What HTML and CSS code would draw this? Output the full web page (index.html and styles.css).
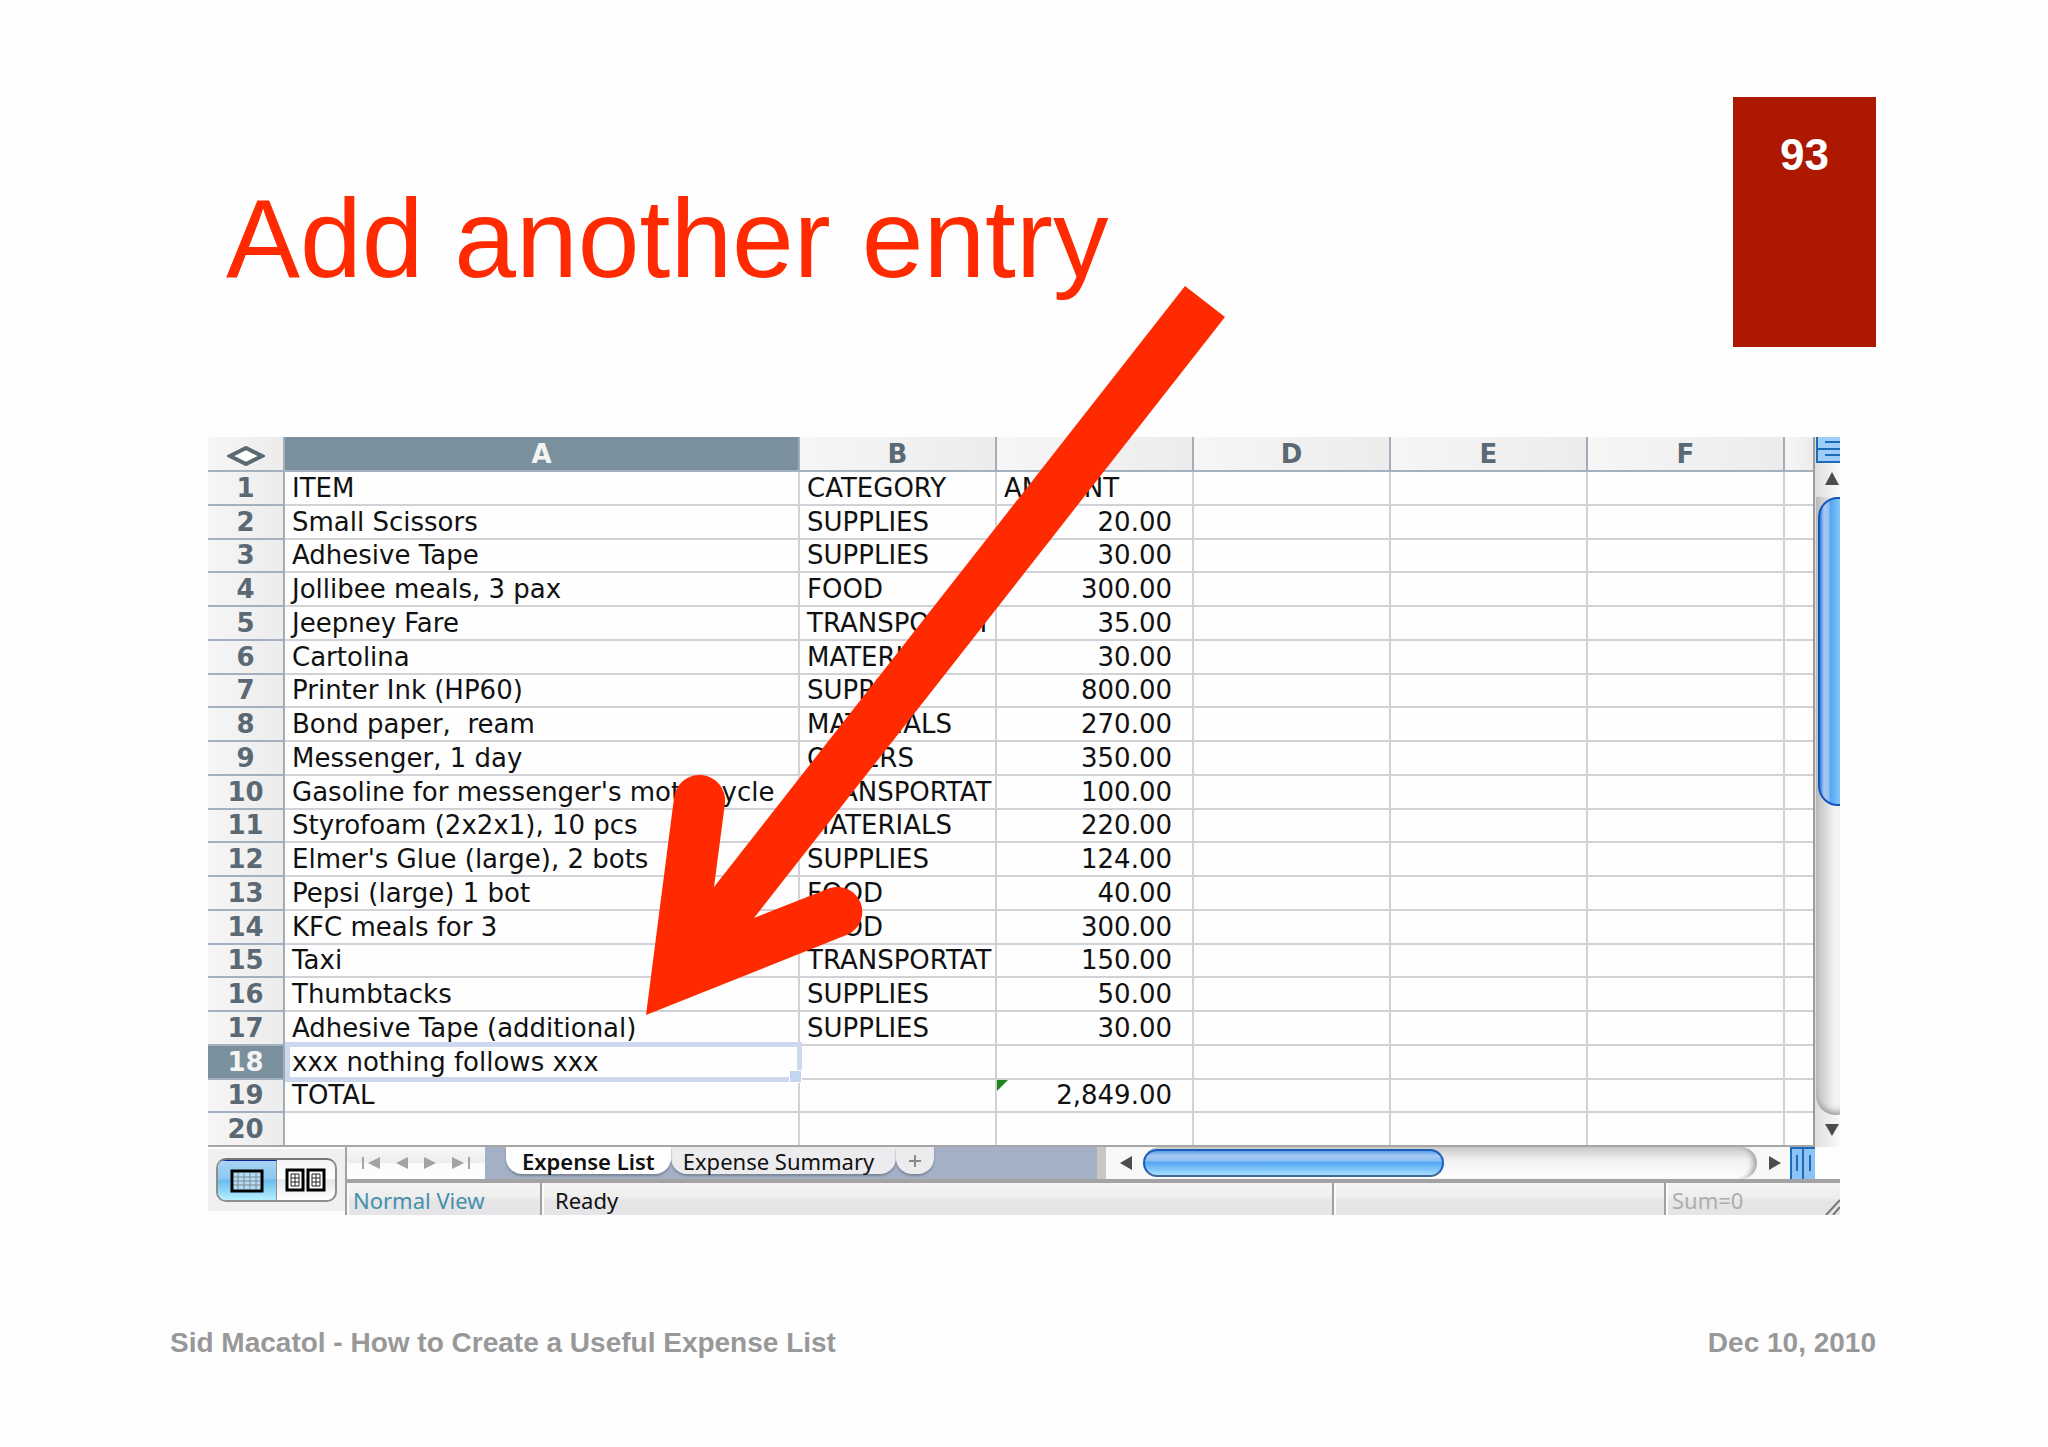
FILE: index.html
```
<!DOCTYPE html>
<html lang="en">
<head>
  <meta charset="utf-8">
  <title>Add another entry</title>
  <link rel="stylesheet" href="styles.css">
</head>
<body>
  <header class="slide-header">
    <h1>Add another entry</h1>
    <div class="page-number">93</div>
  </header>

  <main class="sheet">
    <div class="grid-area">
      <table class="grid">
        <colgroup>
          <col class="col-head"><col class="col-item"><col class="col-std"><col class="col-std"><col class="col-std"><col class="col-std"><col class="col-std"><col>
        </colgroup>
        <thead>
          <tr>
            <th><svg class="diamond" width="38" height="20" viewBox="0 0 38 20"><path d="M3 10L19 2L35 10L19 18Z" fill="#fff" stroke="#5b6971" stroke-width="4"/></svg></th>
            <th class="active">A</th><th>B</th><th>C</th><th>D</th><th>E</th><th>F</th><th></th>
          </tr>
        </thead>
        <tbody>
          <tr><th>1</th><td>ITEM</td><td>CATEGORY</td><td>AMOUNT</td><td></td><td></td><td></td><td></td></tr>
          <tr><th>2</th><td>Small Scissors</td><td>SUPPLIES</td><td class="num">20.00</td><td></td><td></td><td></td><td></td></tr>
          <tr><th>3</th><td>Adhesive Tape</td><td>SUPPLIES</td><td class="num">30.00</td><td></td><td></td><td></td><td></td></tr>
          <tr><th>4</th><td>Jollibee meals, 3 pax</td><td>FOOD</td><td class="num">300.00</td><td></td><td></td><td></td><td></td></tr>
          <tr><th>5</th><td>Jeepney Fare</td><td>TRANSPORTAT</td><td class="num">35.00</td><td></td><td></td><td></td><td></td></tr>
          <tr><th>6</th><td>Cartolina</td><td>MATERIALS</td><td class="num">30.00</td><td></td><td></td><td></td><td></td></tr>
          <tr><th>7</th><td>Printer Ink (HP60)</td><td>SUPPLIES</td><td class="num">800.00</td><td></td><td></td><td></td><td></td></tr>
          <tr><th>8</th><td>Bond paper,  ream</td><td>MATERIALS</td><td class="num">270.00</td><td></td><td></td><td></td><td></td></tr>
          <tr><th>9</th><td>Messenger, 1 day</td><td>OTHERS</td><td class="num">350.00</td><td></td><td></td><td></td><td></td></tr>
          <tr><th>10</th><td>Gasoline for messenger's motorcycle</td><td>TRANSPORTAT</td><td class="num">100.00</td><td></td><td></td><td></td><td></td></tr>
          <tr><th>11</th><td>Styrofoam (2x2x1), 10 pcs</td><td>MATERIALS</td><td class="num">220.00</td><td></td><td></td><td></td><td></td></tr>
          <tr><th>12</th><td>Elmer's Glue (large), 2 bots</td><td>SUPPLIES</td><td class="num">124.00</td><td></td><td></td><td></td><td></td></tr>
          <tr><th>13</th><td>Pepsi (large) 1 bot</td><td>FOOD</td><td class="num">40.00</td><td></td><td></td><td></td><td></td></tr>
          <tr><th>14</th><td>KFC meals for 3</td><td>FOOD</td><td class="num">300.00</td><td></td><td></td><td></td><td></td></tr>
          <tr><th>15</th><td>Taxi</td><td>TRANSPORTAT</td><td class="num">150.00</td><td></td><td></td><td></td><td></td></tr>
          <tr><th>16</th><td>Thumbtacks</td><td>SUPPLIES</td><td class="num">50.00</td><td></td><td></td><td></td><td></td></tr>
          <tr><th>17</th><td>Adhesive Tape (additional)</td><td>SUPPLIES</td><td class="num">30.00</td><td></td><td></td><td></td><td></td></tr>
          <tr><th class="active">18</th><td class="selected">xxx nothing follows xxx</td><td></td><td></td><td></td><td></td><td></td><td></td></tr>
          <tr><th>19</th><td>TOTAL</td><td></td><td class="num flagged">2,849.00</td><td></td><td></td><td></td><td></td></tr>
          <tr><th>20</th><td></td><td></td><td></td><td></td><td></td><td></td><td></td></tr>
        </tbody>
      </table>

      <div class="vscroll">
        <svg class="split-v" width="24" height="26" viewBox="0 0 24 26"><rect x="1" y="-1" width="30" height="26" fill="#9fcdfa" stroke="#1a6cb8" stroke-width="2"/><path d="M1 12H24M9 5H24M9 18H24" stroke="#1a6cb8" stroke-width="2"/></svg>
        <svg class="scroll-up" width="24" height="34" viewBox="0 0 24 34"><path d="M9 22L16 9L23 22Z" fill="#4c4c4c"/></svg>
        <div class="vtrack"><div class="vthumb"></div></div>
        <svg class="scroll-down" width="24" height="32" viewBox="0 0 24 32"><path d="M9 9L16 21L23 9Z" fill="#4c4c4c"/></svg>
      </div>
    </div>

    <div class="bottom">
      <div class="views">
        <div class="view-switch">
          <button class="on" aria-label="Normal view">
            <svg width="34" height="24" viewBox="0 0 34 24"><rect x="2" y="2" width="30" height="20" fill="#b4dcf6" stroke="#000" stroke-width="3"/><path d="M8 4V20M14 4V20M20 4V20M26 4V20M4 8H30M4 12H30M4 16H30" stroke="#7b8a94" stroke-width="1"/></svg>
          </button>
          <button aria-label="Page layout view">
            <svg width="42" height="24" viewBox="0 0 42 24"><g fill="#fff" stroke="#000" stroke-width="3"><rect x="2" y="2" width="16" height="20"/><rect x="23" y="2" width="16" height="20"/></g><path d="M6 6H14V18H6ZM6 10H14M6 14H14M10 6V18M27 6H35V18H27ZM27 10H35M27 14H35M31 6V18" fill="none" stroke="#222" stroke-width="1"/></svg>
          </button>
        </div>
      </div>

      <div class="bars">
        <div class="tab-bar">
          <div class="sheet-nav">
            <button aria-label="First sheet"><svg width="20" height="14" viewBox="0 0 20 14"><path d="M2 1V13" stroke="#a3a3a3" stroke-width="2"/><path d="M19 1V13L7 7Z" fill="#a3a3a3"/></svg></button>
            <button aria-label="Previous sheet"><svg width="12" height="14" viewBox="0 0 12 14"><path d="M12 1V13L0 7Z" fill="#a3a3a3"/></svg></button>
            <button aria-label="Next sheet"><svg width="12" height="14" viewBox="0 0 12 14"><path d="M0 1V13L12 7Z" fill="#a3a3a3"/></svg></button>
            <button aria-label="Last sheet"><svg width="20" height="14" viewBox="0 0 20 14"><path d="M18 1V13" stroke="#a3a3a3" stroke-width="2"/><path d="M1 1V13L13 7Z" fill="#a3a3a3"/></svg></button>
          </div>
          <div class="tabs">
            <button class="tab current">Expense List</button>
            <button class="tab">Expense Summary</button>
            <button class="tab add" aria-label="Add sheet"><svg width="14" height="14" viewBox="0 0 14 14"><path d="M7 1V13M1 7H13" stroke="#8a8a8a" stroke-width="2"/></svg></button>
          </div>
          <div class="hscroll">
            <svg width="37" height="32" viewBox="0 0 37 32"><path d="M26 9V23L14 16Z" fill="#4c4c4c"/></svg>
            <div class="htrack"><div class="hthumb"></div></div>
            <svg width="33" height="32" viewBox="0 0 33 32"><path d="M12 9V23L24 16Z" fill="#4c4c4c"/></svg>
            <svg width="25" height="32" viewBox="0 0 25 32"><rect width="25" height="32" fill="#8ec3f5"/><path d="M1 0V32M13 0V32M0 1H25" stroke="#1a6cb8" stroke-width="2"/><path d="M7 8V24M20 8V24" stroke="#1a6cb8" stroke-width="2"/></svg>
          </div>
          <div class="corner"></div>
        </div>
        <div class="status-bar">
          <div class="status mode">Normal View</div>
          <div class="status ready">Ready</div>
          <div class="status blank"></div>
          <div class="status sum">Sum=0</div>
          <svg class="grip" width="16" height="16" viewBox="0 0 16 16"><path d="M2 16L16 1M9 16L16 8" stroke="#777" stroke-width="2"/></svg>
        </div>
      </div>
    </div>

    <svg class="arrow" viewBox="0 0 1632 778">
      <path d="M438 578L466 361A25 25 0 0 1 517 366L506 450L977 -151L1017 -120L546 481L622 451A25 25 0 0 1 641 497Z" fill="#ff2a00"/>
    </svg>
  </main>

  <footer class="slide-footer">
    <span>Sid Macatol - How to Create a Useful Expense List</span>
    <span>Dec 10, 2010</span>
  </footer>
</body>
</html>
```
FILE: styles.css
```
* {
  box-sizing: border-box;
}

body {
  margin: 0;
  background-color: #fefefe;
  font-family: "Liberation Sans", Arial, sans-serif;
}

button {
  margin: 0;
  padding: 0;
  border: none;
  background: none;
  font: inherit;
  cursor: pointer;
}

svg {
  display: block;
}

.slide-header {
  display: flex;
  justify-content: space-between;
  align-items: flex-start;
  padding: 97px 172px 0 226px;
}

h1 {
  margin: 78px 0 0;
  font-size: 111px;
  line-height: 128px;
  font-weight: normal;
  color: #ff2a00;
}

.page-number {
  width: 143px;
  height: 250px;
  padding-top: 32px;
  background-color: #ac1800;
  color: #fff;
  font-size: 44px;
  line-height: 52px;
  font-weight: bold;
  text-align: center;
}

.sheet {
  position: relative;
  margin: 90px 208px 0;
}

.grid-area {
  display: flex;
}

.grid {
  flex: 1;
  width: 100%;
  height: 710px;
  table-layout: fixed;
  border-collapse: separate;
  border-spacing: 0;
  border-right: 2px solid #9c9c9c;
  border-bottom: 2px solid #a6a6a6;
  font-family: "DejaVu Sans", Verdana, sans-serif;
  font-size: 26px;
  line-height: 30px;
}

.col-head { width: 77px; }
.col-item { width: 515px; }
.col-std { width: 197px; }

.grid th,
.grid td {
  padding: 0;
  overflow: hidden;
  text-align: left;
  white-space: pre;
}

.grid td {
  padding-left: 7px;
  border-right: 2px solid #d2d2d6;
  border-bottom: 2px solid #d2d2d6;
  background-color: #fefefe;
  color: #111;
}

.grid th {
  border-right: 2px solid #a3adb9;
  border-bottom: 2px solid #a3b0bf;
  background: linear-gradient(to right, #f6f6f6, #ececec);
  color: #5a6973;
  text-align: center;
}

.grid thead th {
  height: 35px;
}

.grid th:last-child,
.grid td:last-child {
  border-right: none;
}

.grid tbody tr:last-child > * {
  border-bottom: none;
}

.grid th.active {
  background: #7b909d;
  color: #f4f4f4;
}

.grid td.num {
  padding-right: 20px;
  text-align: right;
}

.diamond {
  margin: 4px auto 0;
}

.grid td.selected {
  position: relative;
  overflow: visible;
}

.selected::before {
  content: "";
  position: absolute;
  inset: -4px -4px -4px 0;
  border: 5px solid #cbd8ed;
}

.selected::after {
  content: "";
  position: absolute;
  right: -4px;
  bottom: -5px;
  width: 11px;
  height: 11px;
  border: 1px solid #fff;
  background-color: #c3d6f1;
}

.grid td.flagged {
  position: relative;
}

.flagged::before {
  content: "";
  position: absolute;
  left: 0;
  top: 0;
  border-top: 11px solid #1f8420;
  border-right: 11px solid transparent;
}

.vscroll {
  display: flex;
  flex-direction: column;
  flex: none;
  width: 25px;
  padding-left: 1px;
  overflow: hidden;
  background: linear-gradient(to right, #dedede, #fafafa);
}

.vtrack {
  flex: 1;
  width: 40px;
  border-radius: 0 0 20px 20px;
  background: linear-gradient(to right, #bdbdbd, #f2f2f2 18px);
  box-shadow: inset 0 -6px 6px -3px #999;
}

.vthumb {
  width: 40px;
  height: 50%;
  margin-left: 2px;
  border: 2px solid #1557b8;
  border-radius: 20px;
  background: linear-gradient(to right, #2f7fe0, #a8c9f2 4px, #98c0f0 9px, #55a5f2 10px, #a8e0ff 28px);
}

.bottom {
  display: flex;
  height: 68px;
}

.views {
  display: flex;
  width: 137px;
  height: 64px;
  padding: 9px 8px;
  border-top: 2px solid #fff;
  background-color: #f0f0f0;
}

.view-switch {
  display: flex;
  flex: 1;
  height: 44px;
  overflow: hidden;
  border: 2px solid #8e8e8e;
  border-top-color: #777;
  border-radius: 10px;
  background: linear-gradient(#f4f4f4, #fff 45%, #e4e8ec 50%, #fff);
}

.view-switch button {
  display: flex;
  flex: 1;
  justify-content: center;
  align-items: center;
}

.view-switch .on {
  border-top: 1px solid #10239b;
  border-right: 1px solid #8e8e8e;
  background: linear-gradient(#a9d4f5, #8bc8f2 45%, #6bbcf0 50%, #b5f0ff);
}

.bars {
  flex: 1;
  min-width: 0;
}

.tab-bar {
  display: flex;
  height: 36px;
  border-bottom: 4px solid #a3a3a5;
  border-left: 2px solid #a3a3a5;
  background-color: #a3b0c6;
}

.sheet-nav {
  display: flex;
  justify-content: space-between;
  align-items: center;
  width: 138px;
  padding: 0 14px;
  background: linear-gradient(#f8f8f8, #ededed 48%, #fafafa 52%, #fff);
}

.tabs {
  display: flex;
  flex: 1;
  align-items: flex-start;
  padding-left: 21px;
}

.tab {
  height: 27px;
  padding: 0 16px;
  border-radius: 0 0 16px 16px;
  background-color: #ececef;
  box-shadow: 0 2px 2px #7c8796;
  color: #111;
  font-family: "Noto Sans", "Open Sans", sans-serif;
  font-size: 22px;
  line-height: 26px;
}

.tab + .tab {
  padding-left: 12px;
  padding-right: 22px;
}

.tab.current {
  position: relative;
  background-color: #fff;
  font-weight: 600;
}

.tab.tab.add {
  padding: 0 12px;
}

.hscroll {
  display: flex;
  width: 718px;
  border-left: 9px solid #c8c8c8;
  background-color: #f8f8f8;
}

.htrack {
  flex: 1;
  border-radius: 16px;
  background: linear-gradient(#c9c9c9, #f0f0f0 40%, #fff);
  box-shadow: inset -7px 0 5px -3px #aaa;
}

.hthumb {
  width: 49%;
  height: 28px;
  margin-top: 2px;
  border: 2px solid #1c5fb8;
  border-bottom-color: #42688f;
  border-radius: 14px;
  background: linear-gradient(#5b9be8, #a6cbf3 20%, #8fc0f2 40%, #54a6f2 48%, #a5e0ff);
}

.corner {
  width: 25px;
  background-color: #fefefe;
}

.status-bar {
  position: relative;
  display: flex;
  height: 32px;
  overflow: hidden;
  background: linear-gradient(#f4f4f2, #eeeeee 45%, #e5e4e6 55%, #e5e4e6);
  font-family: "Noto Sans", "Open Sans", sans-serif;
  font-size: 22px;
  line-height: 34px;
}

.status {
  padding-left: 6px;
  border-left: 2px solid #a0a0a0;
  box-shadow: inset 2px 0 0 #fafafa;
}

.mode {
  width: 195px;
  color: #4590ab;
}

.ready {
  flex: 1;
  padding-left: 13px;
  color: #111;
}

.blank {
  width: 332px;
}

.sum {
  width: 176px;
  color: #adadad;
}

.grip {
  position: absolute;
  right: 0;
  bottom: 0;
}

.arrow {
  position: absolute;
  left: 0;
  top: 0;
  width: 100%;
  overflow: visible;
  pointer-events: none;
}

.slide-footer {
  display: flex;
  justify-content: space-between;
  margin: 112px 172px 0 170px;
  font-size: 28px;
  line-height: 32px;
  font-weight: bold;
  color: #989898;
}
```
